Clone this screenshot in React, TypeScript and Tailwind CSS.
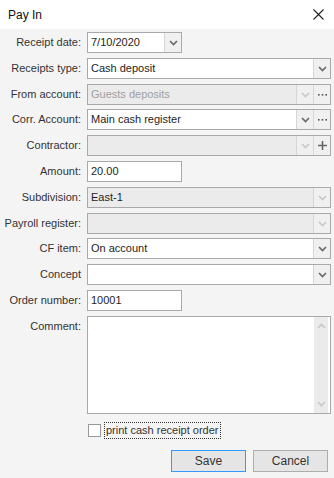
import React from "react";

const Chevron = ({ disabled, up }: { disabled?: boolean; up?: boolean }) => (
  <svg width="9" height="6" viewBox="0 0 9 6">
    <path
      d={up ? "M1 5 L4.5 1.5 L8 5" : "M1 1 L4.5 4.5 L8 1"}
      fill="none"
      stroke={disabled ? "#c9c9c9" : "#6a6a6a"}
      strokeWidth="1.7"
    />
  </svg>
);

type ComboProps = {
  value?: string;
  disabled?: boolean;
  dimText?: boolean;
  narrow?: boolean;
  extra?: "dots" | "plus";
};

const Combo = ({ value, disabled, dimText, narrow, extra }: ComboProps) => (
  <div
    className={`${narrow ? "w-[95px]" : "flex-1"} h-[21px] flex border border-[#a9a9a9] ${
      disabled ? "bg-[#ebebeb]" : "bg-white"
    }`}
  >
    <div
      className={`flex-1 flex items-center pl-[3px] truncate ${
        dimText ? "text-[#a0a0a0]" : "text-[#1e1e1e]"
      }`}
    >
      {value}
    </div>
    <div className="w-[17px] flex items-center justify-center border-l border-[#d6d6d6] bg-[#f0f0f0]">
      <Chevron disabled={disabled} />
    </div>
    {extra && (
      <div className="w-[17px] flex items-center justify-center border-l border-[#d6d6d6] bg-[#f0f0f0]">
        {extra === "dots" ? (
          <svg width="9" height="3" viewBox="0 0 9 3">
            <rect x="0" y="1" width="1.6" height="1.6" fill="#555" />
            <rect x="3.7" y="1" width="1.6" height="1.6" fill="#555" />
            <rect x="7.4" y="1" width="1.6" height="1.6" fill="#555" />
          </svg>
        ) : (
          <svg width="9" height="9" viewBox="0 0 9 9">
            <path d="M4.5 0 V9 M0 4.5 H9" stroke="#666" strokeWidth="1.6" />
          </svg>
        )}
      </div>
    )}
  </div>
);

const TextBox = ({ value }: { value: string }) => (
  <div className="w-[95px] h-[21px] border border-[#a9a9a9] bg-white flex items-center pl-[3px] text-[#1e1e1e]">
    {value}
  </div>
);

const Row = ({
  label,
  mt,
  children,
}: {
  label: string;
  mt: string;
  children: React.ReactNode;
}) => (
  <div className={`flex items-center h-[21px] ${mt}`}>
    <div className="w-[81px] text-right text-[#333] whitespace-nowrap">{label}</div>
    <div className="ml-[6px] flex-1 flex">{children}</div>
  </div>
);

export default function App() {
  return (
    <div
      className="w-[334px] h-[478px] bg-[#f4f4f4] text-[11px] leading-none overflow-hidden"
      style={{ fontFamily: '"Liberation Sans", Arial, sans-serif' }}
    >
      <div className="h-[29px] bg-white flex items-center justify-between pl-[8px] pr-[10px]">
        <span className="text-[12px] text-[#111]">Pay In</span>
        <svg width="11" height="11" viewBox="0 0 11 11">
          <path d="M0.5 0.5 L10.5 10.5 M10.5 0.5 L0.5 10.5" stroke="#222" strokeWidth="1.1" />
        </svg>
      </div>
      <div className="pt-[3px] pr-[3px] flex flex-col">
        <Row label="Receipt date:" mt="mt-0">
          <Combo value="7/10/2020" narrow />
        </Row>
        <Row label="Receipts type:" mt="mt-[5px]">
          <Combo value="Cash deposit" />
        </Row>
        <Row label="From account:" mt="mt-[5px]">
          <Combo value="Guests deposits" disabled dimText extra="dots" />
        </Row>
        <Row label="Corr. Account:" mt="mt-[4px]">
          <Combo value="Main cash register" extra="dots" />
        </Row>
        <Row label="Contractor:" mt="mt-[5px]">
          <Combo disabled extra="plus" />
        </Row>
        <Row label="Amount:" mt="mt-[5px]">
          <TextBox value="20.00" />
        </Row>
        <Row label="Subdivision:" mt="mt-[5px]">
          <Combo value="East-1" disabled />
        </Row>
        <Row label="Payroll register:" mt="mt-[5px]">
          <Combo disabled />
        </Row>
        <Row label="CF item:" mt="mt-[4px]">
          <Combo value="On account" />
        </Row>
        <Row label="Concept" mt="mt-[5px]">
          <Combo />
        </Row>
        <Row label="Order number:" mt="mt-[5px]">
          <TextBox value="10001" />
        </Row>
        <div className="flex mt-[5px]">
          <div className="w-[81px] text-right text-[#333] pt-[5px]">Comment:</div>
          <div className="ml-[6px] flex-1 h-[98px] border border-[#a9a9a9] bg-white flex justify-end">
            <div className="w-[14px] mr-[2px] bg-[#ebebeb] flex flex-col items-center justify-between py-[6px]">
              <Chevron disabled up />
              <Chevron disabled />
            </div>
          </div>
        </div>
        <div className="flex items-center mt-[8px] pl-[88px]">
          <div className="w-[13px] h-[13px] border border-[#999] bg-white" />
          <div className="ml-[3px] h-[17px] px-[1px] flex items-center border border-dotted border-[#333] text-[11px] text-[#333]">
            print cash receipt order
          </div>
        </div>
        <div className="flex justify-end gap-[7px] mt-[11px] pr-[3px]">
          <button className="w-[75px] h-[22px] border border-[#3399ff] bg-[#e5e5e5] text-[12px] text-[#333]">
            Save
          </button>
          <button className="w-[75px] h-[22px] border border-[#adadad] bg-[#e5e5e5] text-[12px] text-[#333]">
            Cancel
          </button>
        </div>
      </div>
    </div>
  );
}
